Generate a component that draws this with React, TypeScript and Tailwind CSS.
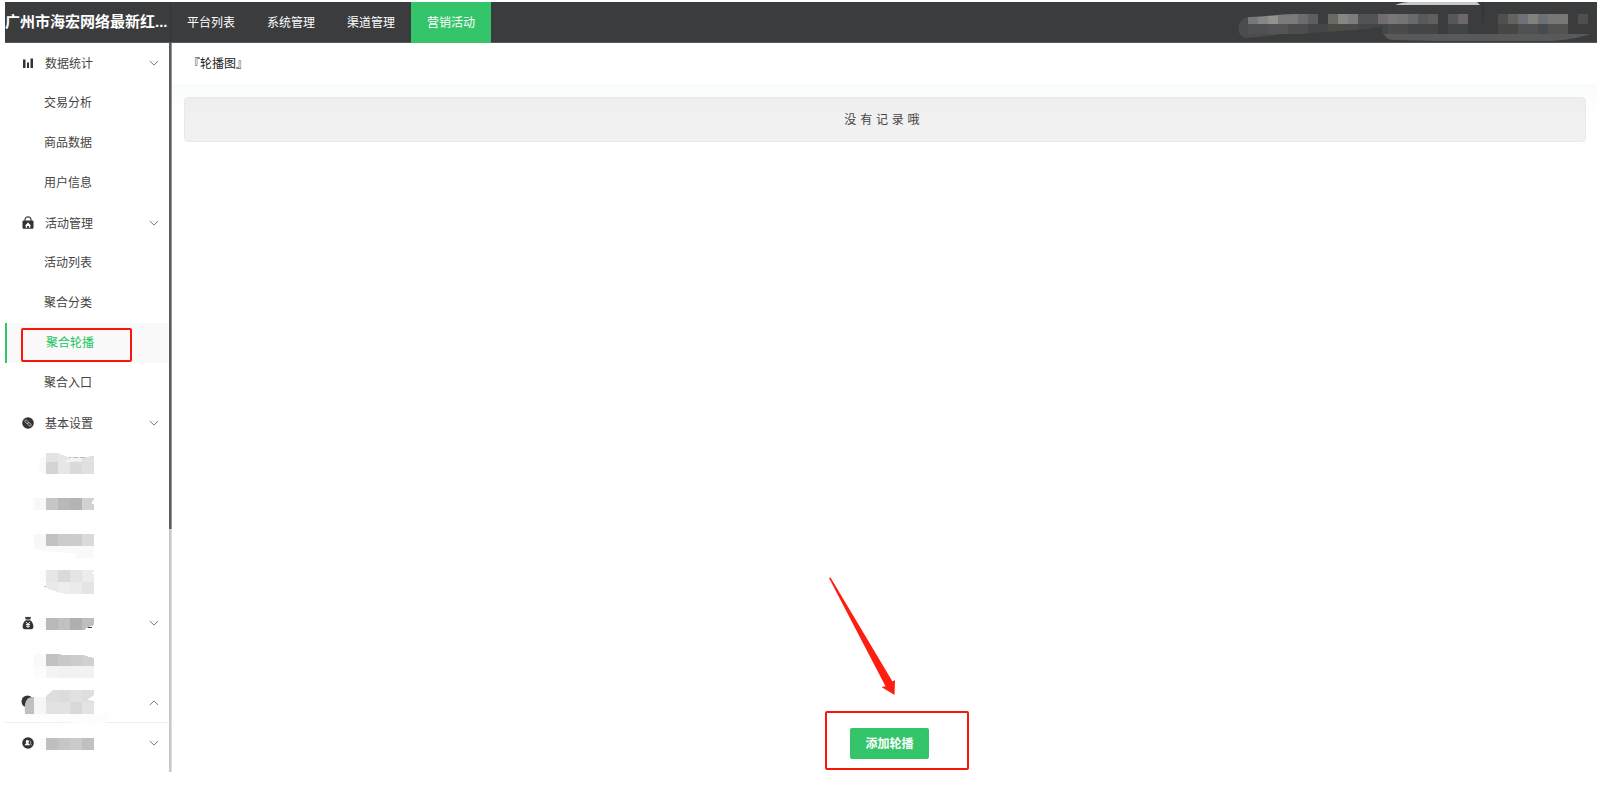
import type { ReactNode } from 'react';

type Cell = [x: number, y: number, w: number, h: number, fill: string];

const navItems = ['平台列表', '系统管理', '渠道管理', '营销活动'];

function Cells({ cells }: { cells: Cell[] }) {
  return (
    <>
      {cells.map(([x, y, w, h, fill]) => (
        <rect key={`${x}-${y}`} x={x} y={y} width={w} height={h} fill={fill} />
      ))}
    </>
  );
}

function Mosaic({ cells, children }: { cells: Cell[]; children?: ReactNode }) {
  return (
    <svg width="80" height="40" viewBox="34 0 80 40" shapeRendering="crispEdges" aria-hidden="true">
      <Cells cells={cells} />
      {children}
    </svg>
  );
}

function Chevron({ up = false }: { up?: boolean }) {
  return (
    <svg className="ml-auto shrink-0" width="10" height="6" viewBox="0 0 10 6" fill="none" stroke="#777" aria-hidden="true">
      <path d={up ? 'M.8 5 5 .9 9.2 5' : 'M.8 1 5 5.1 9.2 1'} />
    </svg>
  );
}

function BarsIcon() {
  return (
    <svg width="12" height="12" viewBox="0 0 12 12" fill="#333" aria-hidden="true">
      <path d="M1 2.500h2.500V11H1zM5 5.500h2V11H5zM8.500 1.500H11V11H8.500z" />
    </svg>
  );
}

function BagIcon() {
  return (
    <svg width="12" height="14" viewBox="0 0 12 14" aria-hidden="true">
      <path d="M3 5V3.800a3 3 0 0 1 6 0V5" fill="none" stroke="#444" strokeWidth="1.200" />
      <rect x=".5" y="4.400" width="11" height="8.400" rx="1" fill="#333" />
      <path d="m6 6.600 3 2.800H8.300v2.300H6.900V10H5.100v1.700H3.700V9.400H3z" fill="#fff" />
    </svg>
  );
}

function LinkIcon() {
  return (
    <svg width="12" height="12" viewBox="0 0 12 12" aria-hidden="true">
      <circle cx="6" cy="6" r="5.8" fill="#333" />
      <g fill="none" stroke="#ccc" strokeWidth=".8">
        <rect x="2.7" y="3.600" width="3.900" height="2.300" rx="1.100" transform="rotate(45 4.6 4.7)" />
        <rect x="5.400" y="6.200" width="3.900" height="2.300" rx="1.100" transform="rotate(45 7.4 7.4)" />
      </g>
    </svg>
  );
}

function MoneyIcon() {
  return (
    <svg width="12" height="14" viewBox="0 0 12 14" aria-hidden="true">
      <path d="M3 .8 4.4 1.2 6 .7l1.6.5L9 .8 8.3 3.5H3.7z" fill="#333" />
      <path d="M3.6 4.2h4.8c1.700 1.300 3 3.700 3 6.300 0 1.800-.8 2.700-2.200 2.700H2.800C1.400 13.200.6 12.300.6 10.500c0-2.600 1.300-5 3-6.300z" fill="#333" />
      <path d="m4 6 2 2.200L8 6M4 8.500h4M4 10.200h4M6 8.200V12" stroke="#fff" strokeWidth=".9" fill="none" />
    </svg>
  );
}

function UserIcon() {
  return (
    <svg width="12" height="12" viewBox="0 0 12 12" aria-hidden="true">
      <circle cx="6" cy="6" r="5.8" fill="#333" />
      <path d="M5.300 3a1.600 1.600 0 0 1 1 2.900c.1.600 1.500.7 1.600 2.300H2.800c.1-1.600 1.500-1.700 1.600-2.300A1.600 1.600 0 0 1 5.300 3z" fill="#fff" />
      <path d="M7.700 3.500c1.300.6 1.300 2 .6 2.700.7.500 1 1 1 2" stroke="#ccc" strokeWidth=".8" fill="none" />
    </svg>
  );
}

function Group({ icon, label, up, children }: { icon?: ReactNode; label?: string; up?: boolean; children?: ReactNode }) {
  return (
    <button type="button" aria-expanded={!up} className="flex h-10 w-full items-center pr-[10px] pl-[17px] text-left">
      {icon}
      {label && <span className="ml-[11px] pt-0.5">{label}</span>}
      {children}
      <Chevron up={up} />
    </button>
  );
}

function Sub({ label, children }: { label?: string; children?: ReactNode }) {
  return (
    <a href="#" className={`flex h-10 items-center ${label ? 'pl-[39px]' : 'pl-[29px]'}`}>
      {label}
      {children}
    </a>
  );
}

function AccountMosaic() {
  const top: Cell[] = [
    [28, 14, 10, 10, '#77787c'], [38, 14, 10, 10, '#85868a'], [48, 14, 10, 10, '#92938f'], [58, 14, 20, 10, '#7b7a7a'],
    [78, 14, 10, 10, '#6c6b71'], [88, 14, 10, 10, '#5e5e60'], [108, 14, 10, 10, '#6a6961'], [118, 14, 10, 10, '#858784'],
    [128, 14, 10, 10, '#7b7c7b'], [138, 14, 20, 10, '#525354'], [158, 14, 10, 10, '#716c70'], [168, 14, 10, 10, '#7b7678'],
    [178, 14, 10, 10, '#737276'], [188, 14, 10, 10, '#696a6d'], [198, 14, 10, 10, '#535b5f'], [208, 14, 10, 10, '#625e5c'],
    [228, 14, 10, 10, '#55585b'], [238, 14, 10, 10, '#6d676d'], [278, 14, 10, 10, '#504f4d'], [288, 14, 10, 10, '#64645f'],
    [298, 14, 10, 10, '#6c7277'], [308, 14, 10, 10, '#81817f'], [318, 14, 10, 10, '#6b7175'], [328, 14, 20, 10, '#7a7877'],
    [358, 14, 10, 10, '#504f4c'],
  ];
  const bottom: Cell[] = [
    [28, 24, 20, 10, '#505153'], [48, 24, 20, 10, '#545556'], [68, 24, 20, 10, '#4c4d4f'], [88, 24, 20, 10, '#454648'],
    [108, 24, 30, 10, '#4d4b47'], [138, 24, 30, 10, '#454648'], [168, 24, 20, 10, '#4b4b4b'], [188, 24, 30, 10, '#434547'],
    [228, 24, 20, 10, '#414345'], [278, 24, 20, 10, '#454645'], [298, 24, 20, 10, '#505252'], [318, 24, 10, 10, '#484b4d'],
    [328, 24, 20, 10, '#525251'],
  ];
  return (
    <svg className="ml-auto shrink-0" width="377" height="40" viewBox="0 2 377 40" aria-hidden="true">
      <path d="M40 17H27c-11 3-12 20 0 21l31-3V17z" fill="#4b4c4e" />
      <g shapeRendering="crispEdges">
        <Cells cells={top} />
        <Cells cells={bottom} />
      </g>
      <path d="M28 14h50c-20 0-30 3-50 3zM52 38l38-5 58-4 15-3v12z" fill="#3b3c3d" />
      <path d="M162 27c1 9 5 13 12 13l42 1h115c20-1 34-5 39-7l-12 0H164z" fill="#58595a" />
      <path d="M175 5c5-2 10-3 15-3h67l3 3z" fill="#c7c7c7" />
      <path d="M263 2v20" stroke="#303132" />
    </svg>
  );
}

export default function App() {
  return (
    <div className="flex min-h-screen flex-col bg-white pt-0.5 pl-[5px] font-['Liberation_Sans','Noto_Sans_CJK_SC',sans-serif] text-xs text-[#444]">
      <header className="flex h-[41px] border-b border-[#58595a] bg-[#3b3c3d] text-white">
        <h1 className="w-[166px] shrink-0 border-r border-[#343536] text-[15px] leading-10 font-bold whitespace-nowrap">广州市海宏网络最新红...</h1>
        <nav className="-mb-px flex">
          {navItems.map((item) => (
            <a
              key={item}
              href="#"
              className={`px-4 pt-px leading-10 ${item === '营销活动' ? 'bg-[#34c56a]' : ''}`}
            >
              {item}
            </a>
          ))}
        </nav>
        <AccountMosaic />
      </header>

      <div className="flex flex-1">
        <aside className="mb-[13px] flex w-[167px] shrink-0">
          <div className="min-w-0 flex-1">
            <Group icon={<BarsIcon />} label="数据统计" />
            <Sub label="交易分析" />
            <Sub label="商品数据" />
            <Sub label="用户信息" />
            <Group icon={<BagIcon />} label="活动管理" />
            <Sub label="活动列表" />
            <Sub label="聚合分类" />
            <a href="#" className="relative flex h-10 items-center border-l-2 border-[#34c56a] bg-[#f9f9f9] pl-[39px] text-[#22c45e]">
              聚合轮播
              <span className="pointer-events-none absolute top-[5px] left-3.5 h-[34px] w-[111px] rounded-xs border-2 border-[#fb1409]" />
            </a>
            <Sub label="聚合入口" />
            <Group icon={<LinkIcon />} label="基本设置" />
            <Sub>
              <Mosaic
                cells={[
                  [46, 10, 12, 9, '#e3e3e3'], [58, 10, 12, 9, '#e6e6e6'], [70, 10, 12, 9, '#ebebeb'], [82, 10, 12, 9, '#e1e1e1'],
                  [46, 19, 12, 12, '#d4d4d4'], [58, 19, 12, 12, '#e7e7e7'], [70, 19, 12, 12, '#dadada'], [82, 19, 12, 12, '#e0e0e0'],
                ]}
              >
                <path d="M46 12c-9 2-10 18 0 19z" fill="#f9f9f9" />
                <path d="M56 10c5 0 8 4 14 4h13l11-1v-3z" fill="#fff" />
                <path d="M64 19l6-4h12v3z" fill="#f2f2f2" />
                <path d="M69 14.500h2m2 0h5m2 0h5" stroke="#bbb" />
              </Mosaic>
            </Sub>
            <Sub>
              <Mosaic
                cells={[
                  [34, 15, 12, 12, '#f8f8f8'], [46, 15, 12, 12, '#c6c6c6'], [58, 15, 12, 12, '#b9b9b9'],
                  [70, 15, 12, 12, '#b4b4b4'], [82, 15, 12, 12, '#d2d2d2'],
                ]}
              >
                <circle cx="94" cy="19" r="2" fill="#fff" />
              </Mosaic>
            </Sub>
            <Sub>
              <Mosaic
                cells={[
                  [34, 11, 12, 12, '#f8f8f8'], [46, 11, 12, 12, '#c2c2c2'], [58, 11, 12, 12, '#cbcbcb'],
                  [70, 11, 12, 12, '#cccccc'], [82, 11, 12, 12, '#dadada'],
                ]}
              >
                <path d="M34 23h60v12H74l4-5c-18 0-34-2-44-4z" fill="#f9f9f9" />
              </Mosaic>
            </Sub>
            <Sub>
              <Mosaic
                cells={[
                  [40, 7, 6, 12, '#fcfcfc'], [46, 7, 12, 12, '#e6e6e6'], [58, 7, 12, 12, '#dadada'], [70, 7, 12, 12, '#e4e4e4'], [82, 7, 12, 12, '#ececec'],
                  [46, 19, 12, 12, '#e9e9e9'], [58, 19, 12, 12, '#eeeeee'], [70, 19, 12, 12, '#ebebeb'], [82, 19, 12, 12, '#e4e4e4'],
                ]}
              >
                <path d="M44 24c9 4 17 7 26 7v2H44zM94 8v3h-3z" fill="#fff" />
                <path d="M44 23.500h2" stroke="#bbb" />
              </Mosaic>
            </Sub>
            <Group icon={<MoneyIcon />}>
              <Mosaic
                cells={[
                  [39, 15, 7, 12, '#fafafa'], [46, 15, 12, 12, '#b9b9b9'], [58, 15, 12, 12, '#c1c1c1'],
                  [70, 15, 12, 12, '#afafaf'], [82, 15, 12, 12, '#bebebe'],
                ]}
              >
                <path d="M94 22c-4 1-7 3-10 5h10z" fill="#fff" />
                <path d="M88 24.500h4" stroke="#444" />
              </Mosaic>
            </Group>
            <Sub>
              <Mosaic
                cells={[
                  [34, 11, 12, 12, '#f9f9f9'], [46, 11, 12, 12, '#c2c2c2'], [58, 11, 12, 12, '#c8c8c8'], [70, 11, 12, 12, '#cccccc'], [82, 11, 12, 12, '#d1d1d1'],
                  [34, 23, 12, 12, '#fcfcfc'], [46, 23, 12, 12, '#f4f4f4'], [58, 23, 36, 12, '#f2f2f2'],
                ]}
              >
                <path d="M58 11c9 2 18 1 25 1l11 3v-4z" fill="#fff" />
              </Mosaic>
            </Sub>
            <button type="button" aria-expanded="false" className="flex h-10 w-full items-center border-b border-[#eee] pr-[10px] pl-4">
              <svg width="93" height="40" viewBox="21 0 93 40" overflow="visible" aria-hidden="true">
                <circle cx="27.500" cy="18.500" r="6" fill="#333" />
                <path d="M34 14c-8 0-10 4-9 17h9z" fill="#c0c0c0" />
                <g shapeRendering="crispEdges">
                  <Cells
                    cells={[
                      [34, 14, 12, 17, '#f6f6f6'], [46, 7, 12, 12, '#dedede'], [58, 7, 12, 12, '#dcdcdc'], [70, 7, 12, 12, '#e1e1e1'], [82, 7, 12, 12, '#dedede'],
                      [46, 19, 24, 12, '#e2e2e2'], [70, 19, 12, 12, '#d9d9d9'], [82, 19, 12, 12, '#e3e3e3'],
                    ]}
                  />
                </g>
                <path d="M46 7h7l-7 6zM94 12l-7 5 7 1z" fill="#fff" />
                <path d="M25 31h85c1 5-1 9-7 9-8 2-18 2-24 0l-50-3z" fill="#fdfdfd" />
              </svg>
              <Chevron up />
            </button>
            <Group icon={<UserIcon />}>
              <Mosaic
                cells={[
                  [40, 15, 6, 12, '#fafafa'], [46, 15, 12, 12, '#bfbfbf'], [58, 15, 12, 12, '#c6c6c6'],
                  [70, 15, 12, 12, '#cbcbcb'], [82, 15, 12, 12, '#c0c0c0'],
                ]}
              />
            </Group>
          </div>
          <div className="w-[3px] border-r border-[#dedede] bg-[#c8c8c8]">
            <div className="-mr-px h-2/3 border-r border-[#949696] bg-[#595c5c]" />
          </div>
        </aside>

        <main className="flex min-w-0 flex-1 flex-col">
          <h2 className="pt-0.5 pl-4 leading-[39px] font-normal text-[#222]">『轮播图』</h2>
          <div className="bg-linear-to-b from-[#f9fbfb] to-white to-[32px] pt-[13px] pr-[11px] pl-3">
            <p className="rounded border border-[#e9e9e9] bg-linear-to-b from-[#eeeeee] to-[#f1f1f1] to-50% pt-0.5 pr-1.5 text-center font-['DejaVu_Sans','Noto_Sans_CJK_SC',sans-serif] leading-[41px] text-[#444]">
              没 有 记 录 哦
            </p>
          </div>
          <div className="mt-auto flex justify-center pb-[26px] pl-2.5">
            <div className="relative">
              <button type="button" className="block h-[31px] rounded-xs bg-[#34c56a] px-[15px] pt-px font-bold text-white">添加轮播</button>
              <span className="pointer-events-none absolute -top-[17px] -right-[40px] -bottom-[11px] -left-[25px] rounded-xs border-2 border-[#fb1409]" />
              <svg className="pointer-events-none absolute bottom-[61px] -left-[24px]" width="74" height="124" viewBox="826 574 74 124" aria-hidden="true">
                <path d="m829 578 1.500-.5 62 104 2.500-1.500-.5 15-13-8 4-.7z" fill="#ff1d10" />
              </svg>
            </div>
          </div>
        </main>
      </div>
    </div>
  );
}
